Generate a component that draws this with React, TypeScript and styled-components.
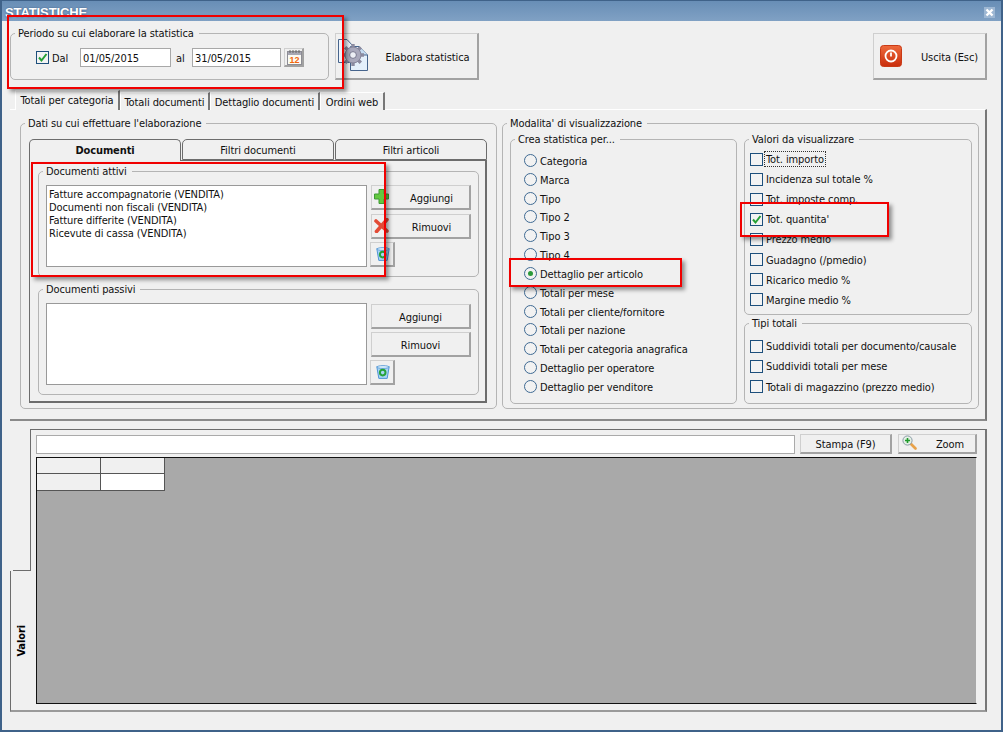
import React from "react";
import styled, { createGlobalStyle } from "styled-components";

const Global = createGlobalStyle`
  html, body { margin: 0; padding: 0; background: #f0f0f0; }
  * { box-sizing: border-box; }
`;

const Window = styled.div`
  position: relative;
  width: 1003px;
  height: 732px;
  overflow: hidden;
  border: 2px solid #3f6289;
  border-top-width: 1px;
  background: #f0f0f0;
  color: #111;
  font: 11px/13px "DejaVu Sans Condensed", "DejaVu Sans", sans-serif;
  font-stretch: condensed;
  letter-spacing: -0.1px;
  display: flex;
  flex-direction: column;
`;
const TitleBar = styled.div`
  height: 20px;
  flex: none;
  background: linear-gradient(#688eb6, #80a1c4);
  display: flex;
  align-items: center;
  justify-content: space-between;
  padding: 2px 6px 0 3px;
`;
const TitleText = styled.span`
  font: bold 13px "Liberation Sans", sans-serif;
  color: #fff;
  text-shadow: 0 0 2px #3b5a80;
`;
const CloseBox = styled.span`
  width: 11px;
  height: 11px;
  background: #9db7d3;
  display: flex;
`;
const Content = styled.div`
  flex: 1;
  padding: 0 14px 0 8px;
  display: flex;
  flex-direction: column;
`;
const TopRow = styled.div`
  margin-top: 5px;
  height: 54px;
  display: flex;
  align-items: flex-end;
`;
const Group = styled.fieldset<{ $w: number; $h: number; $pt?: number; $pl?: number }>`
  margin: 0;
  min-width: 0;
  width: ${(p) => p.$w}px;
  height: ${(p) => p.$h}px;
  flex: none;
  padding: ${(p) => p.$pt ?? 0}px 0 0 ${(p) => p.$pl ?? 0}px;
  border: 1px solid #b4b4b4;
  border-radius: 5px;
  & > legend {
    margin-left: ${(p) => 4 - (p.$pl ?? 0)}px;
  }
`;
const Legend = styled.legend`
  padding: 0 5px 0 3px;
  height: 14px;
  line-height: 16px;
  white-space: nowrap;
`;
const PeriodRow = styled.div`
  display: flex;
  align-items: center;
  height: 19px;
`;
const DateInput = styled.div<{ $w: number }>`
  width: ${(p) => p.$w}px;
  height: 19px;
  background: #fff;
  border: 1px solid #a8a8a8;
  padding-left: 2px;
  line-height: 19px;
`;
const AlLabel = styled.span`
  width: 21px;
  padding: 1px 0 0 5px;
`;
const DalLabel = styled.span`
  width: 31px;
  padding: 2px 0 0 3px;
`;
const Btn = styled.div<{ $w: number; $h: number; $ml?: number; $mt?: number; $auto?: boolean }>`
  flex: none;
  width: ${(p) => p.$w}px;
  height: ${(p) => p.$h}px;
  margin-left: ${(p) => (p.$auto ? "auto" : `${p.$ml ?? 0}px`)};
  margin-top: ${(p) => p.$mt ?? 0}px;
  display: flex;
  align-items: center;
  background: #f0f0f0;
  border: 1px solid #cfcfcf;
  border-right: 2px solid #a2a2a2;
  border-bottom: 2px solid #a2a2a2;
`;
const BtnIcon = styled.span<{ $w: number; $pl?: number; $pb?: number }>`
  flex: none;
  width: ${(p) => p.$w}px;
  padding-left: ${(p) => p.$pl ?? 0}px;
  padding-bottom: ${(p) => p.$pb ?? 0}px;
  display: flex;
`;
const BtnLabel = styled.span`
  flex: 1;
  padding-top: 2px;
  text-align: center;
  white-space: nowrap;
`;
const TabStrip = styled.div`
  margin-top: 11px;
  height: 19px;
  padding-left: 5px;
  display: flex;
  align-items: flex-end;
  position: relative;
  z-index: 1;
  margin-bottom: -1px;
`;
const TopTab = styled.div<{ $w: number; $active?: boolean }>`
  width: ${(p) => p.$w}px;
  height: ${(p) => (p.$active ? 20 : 18)}px;
  text-align: center;
  line-height: 19px;
  background: #f0f0f0;
  border-top: 1px solid #fff;
  border-left: 1px solid #fff;
  border-right: 2px solid #777;
  white-space: nowrap;
`;
const MainPanel = styled.div`
  height: 312px;
  width: 977px;
  flex: none;
  border-top: 1px solid #fff;
  border-right: 2px solid #777;
  border-bottom: 2px solid #8a8a8a;
  padding: 6px 0 0 10px;
  display: flex;
  gap: 5px;
`;
const InnerTabs = styled.div`
  display: flex;
  gap: 1px;
  height: 22px;
  position: relative;
  z-index: 1;
  margin-bottom: -1px;
`;
const InnerTab = styled.div<{ $active?: boolean }>`
  width: 152px;
  height: ${(p) => (p.$active ? 22 : 21)}px;
  border: 1px solid #6c6c6c;
  border-bottom: ${(p) => (p.$active ? "none" : "1px solid #6c6c6c")};
  border-radius: 5px 5px 0 0;
  background: #f0f0f0;
  text-align: center;
  line-height: 22px;
  font-weight: ${(p) => (p.$active ? 700 : 400)};
`;
const InnerPanel = styled.div`
  width: 458px;
  height: 243px;
  border: 1px solid #6c6c6c;
  border-right-width: 2px;
  border-bottom-width: 2px;
  padding: 3px 0 0 8px;
  display: flex;
  flex-direction: column;
  gap: 5px;
`;
const DocRow = styled.div`
  display: flex;
  gap: 4px;
`;
const ListBox = styled.div`
  width: 321px;
  height: 82px;
  background: #fff;
  border: 1px solid #999;
  padding: 2px 2px;
`;
const ListLine = styled.div`
  height: 13px;
  white-space: nowrap;
`;
const BtnCol = styled.div`
  display: flex;
  flex-direction: column;
`;
const TwoCols = styled.div`
  display: flex;
  gap: 7px;
  margin-top: 2px;
`;
const RightCol = styled.div`
  display: flex;
  flex-direction: column;
  gap: 1px;
`;
const OptRow = styled.div<{ $h: number }>`
  height: ${(p) => p.$h}px;
  display: flex;
  align-items: center;
  white-space: nowrap;
`;
const Radio = styled.span<{ $on?: boolean }>`
  width: 13px;
  height: 13px;
  flex: none;
  margin-right: 3px;
  border-radius: 50%;
  border: 1px solid #3f6a93;
  background: #f2f2f2;
  display: flex;
  align-items: center;
  justify-content: center;
  &::after {
    content: "";
    display: ${(p) => (p.$on ? "block" : "none")};
    width: 5px;
    height: 5px;
    border-radius: 50%;
    background: #2b9a3a;
  }
`;
const RadioLabel = styled.span`
  padding-top: 2px;
`;
const CheckBox = styled.span`
  width: 13px;
  height: 13px;
  flex: none;
  border: 1px solid #1d4f7c;
  background: #f3f3f3;
  display: flex;
`;
const CheckLabel = styled.span<{ $focus?: boolean }>`
  margin-left: 2px;
  padding: 1px 1px 0;
  outline: ${(p) => (p.$focus ? "1px dotted #333" : "none")};
`;
const Bottom = styled.div`
  margin-top: 8px;
  height: 283px;
  display: flex;
`;
const SideCol = styled.div`
  width: 20px;
  flex: none;
  display: flex;
  flex-direction: column;
`;
const SideSpacer = styled.div`
  flex: 1;
  border-right: 1px solid #6c6c6c;
  border-bottom: 1px solid #6c6c6c;
  margin-right: -1px;
  margin-left: 3px;
  position: relative;
  z-index: 1;
`;
const SideTab = styled.div`
  height: 141px;
  border-left: 1px solid #6c6c6c;
  border-bottom: 2px solid #9a9a9a;
  display: flex;
  align-items: center;
  justify-content: center;
`;
const SideLabel = styled.span`
  writing-mode: vertical-rl;
  transform: rotate(180deg);
  font-weight: 700;
  color: #000;
  margin-left: 1px;
`;
const Panel = styled.div`
  width: 957px;
  flex: none;
  border-top: 1px solid #6c6c6c;
  border-right: 2px solid #777;
  border-bottom: 2px solid #9a9a9a;
  padding: 4px 0 0 6px;
`;
const Toolbar = styled.div`
  height: 20px;
  display: flex;
  align-items: flex-end;
`;
const SearchBox = styled.div`
  width: 759px;
  height: 19px;
  background: #fff;
  border: 1px solid #aaa;
`;
const GridArea = styled.div`
  margin-top: 3px;
  width: 941px;
  height: 247px;
  background: #a9a9a9;
  border: 1px solid #111;
  border-right-color: #f0f0f0;
`;
const Sheet = styled.div`
  display: grid;
  grid-template-columns: 64px 64px;
  grid-template-rows: 16px 17px;
  width: 128px;
`;
const Cell = styled.div<{ $white?: boolean }>`
  background: ${(p) => (p.$white ? "#fff" : "#f0f0f0")};
  border-right: 1px solid #555;
  border-bottom: 1px solid #555;
`;
const Mark = styled.div<{ $x: number; $y: number; $w: number; $h: number }>`
  position: absolute;
  left: ${(p) => p.$x - 2}px;
  top: ${(p) => p.$y - 1}px;
  width: ${(p) => p.$w}px;
  height: ${(p) => p.$h}px;
  border: 2px solid #f00000;
  box-shadow: 3px 3px 4px rgba(0, 0, 0, 0.4);
  pointer-events: none;
  z-index: 5;
`;

const Tick = () => (
  <svg width="11" height="11" viewBox="0 0 11 11">
    <path d="M2 5.5 L4.5 8.5 L9.5 2" fill="none" stroke="#25a035" strokeWidth="2" />
  </svg>
);
const CloseIcon = () => (
  <svg width="11" height="11" viewBox="0 0 11 11">
    <path d="M2.5 2.5 L8.5 8.5 M8.5 2.5 L2.5 8.5" stroke="#fff" strokeWidth="2.4" />
  </svg>
);
const CalendarIcon = () => (
  <svg width="15" height="16" viewBox="0 0 15 16">
    <rect x="0.5" y="2.5" width="14" height="13" fill="#fbfbf4" stroke="#8d8d95" />
    <rect x="1" y="3" width="13" height="3" fill="#a8a8b4" />
    <path d="M3 1v3M6 1v3M9 1v3M12 1v3" stroke="#666" />
    <text x="7.5" y="13.5" textAnchor="middle" fontSize="9" fontWeight="700" fontFamily="Liberation Sans" fill="#f2660f">12</text>
  </svg>
);
const GearDocIcon = () => (
  <svg width="36" height="36" viewBox="0 0 36 36">
    <path d="M0.5 1.5 H9 L15 8 V24.5 H0.5 Z" fill="#eef4fb" stroke="#46648c" />
    <path d="M12.5 8.5 H21 L29.5 17 V32.5 H12.5 Z" fill="#e4f0fb" stroke="#46648c" />
    <path d="M21 8.5 V17 H29.5" fill="#c4dcf2" stroke="#46648c" />
    <g transform="translate(15 17)">
      <g stroke="#8b8ba0" strokeWidth="3.4">
        <path d="M0 -11 V11 M-11 0 H11 M-7.8 -7.8 L7.8 7.8 M7.8 -7.8 L-7.8 7.8" />
      </g>
      <circle r="8" fill="#a9a9bc" stroke="#85859b" />
      <circle r="3.4" fill="#eceff5" stroke="#77778e" />
    </g>
  </svg>
);
const PowerIcon = () => (
  <svg width="22" height="22" viewBox="0 0 22 22">
    <defs>
      <linearGradient id="pw" x1="0" y1="0" x2="0" y2="1">
        <stop offset="0" stopColor="#ee6a3c" />
        <stop offset="1" stopColor="#c92d0c" />
      </linearGradient>
    </defs>
    <rect x="0.5" y="0.5" width="21" height="21" rx="3" fill="url(#pw)" stroke="#c93a16" />
    <circle cx="11" cy="11" r="5.5" fill="none" stroke="#fff" strokeWidth="1.8" />
    <path d="M11 7.5 V11.5" stroke="#fff" strokeWidth="1.8" />
  </svg>
);
const PlusIcon = () => (
  <svg width="15" height="15" viewBox="0 0 15 15">
    <path d="M5 .5 H10 V5 H14.5 V10 H10 V14.5 H5 V10 H.5 V5 H5 Z" fill="#63c83f" stroke="#3f9a35" />
  </svg>
);
const CrossIcon = () => (
  <svg width="15" height="15" viewBox="0 0 15 15">
    <path d="M2 3 L13 13 M13 1.5 L2.5 13.5" stroke="#e24b36" strokeWidth="3.6" strokeLinecap="round" />
  </svg>
);
const BinIcon = () => (
  <svg width="14" height="14" viewBox="0 0 14 14">
    <path d="M.8 1.6 H13.2 L11.2 13.4 H2.8 Z" fill="#a9d4f5" stroke="#4f95d4" />
    <ellipse cx="7" cy="2" rx="6" ry="1.4" fill="#dff0fc" stroke="#4f95d4" strokeWidth=".8" />
    <circle cx="6.7" cy="7.6" r="2.8" fill="none" stroke="#27a33a" strokeWidth="2" />
  </svg>
);
const ZoomIcon = () => (
  <svg width="15" height="15" viewBox="0 0 15 15">
    <path d="M8.5 8.5 L13.5 13.5" stroke="#e8a24a" strokeWidth="2.6" strokeLinecap="round" />
    <circle cx="5.5" cy="5.5" r="4.6" fill="#e4f0e4" stroke="#8a9aa8" />
    <path d="M5.5 3 V8 M3 5.5 H8" stroke="#1f9a2c" strokeWidth="1.6" />
  </svg>
);

const radios = [
  "Categoria", "Marca", "Tipo", "Tipo 2", "Tipo 3", "Tipo 4", "Dettaglio per articolo",
  "Totali per mese", "Totali per cliente/fornitore", "Totali per nazione",
  "Totali per categoria anagrafica", "Dettaglio per operatore", "Dettaglio per venditore",
];
const values = [
  "Tot. importo", "Incidenza sul totale %", "Tot. imposte comp.", "Tot. quantita'",
  "Prezzo medio", "Guadagno (/pmedio)", "Ricarico medio %", "Margine medio %",
];
const totals = [
  "Suddividi totali per documento/causale", "Suddividi totali per mese", "Totali di magazzino (prezzo medio)",
];
const attivi = [
  "Fatture accompagnatorie (VENDITA)", "Documenti non fiscali (VENDITA)",
  "Fatture differite (VENDITA)", "Ricevute di cassa (VENDITA)",
];

const DocGroup = ({ title, lines, icons }: { title: string; lines: string[]; icons?: boolean }) => (
  <Group $w={441} $h={113} $pt={7} $pl={7}>
    <Legend>{title}</Legend>
    <DocRow>
      <ListBox>
        {lines.map((l) => <ListLine key={l}>{l}</ListLine>)}
      </ListBox>
      <BtnCol>
        <Btn $w={100} $h={25} $mt={icons ? 0 : 1}>
          {icons && <BtnIcon $w={22} $pl={2} $pb={2}><PlusIcon /></BtnIcon>}
          <BtnLabel>Aggiungi</BtnLabel>
        </Btn>
        <Btn $w={100} $h={25} $mt={icons ? 4 : 3}>
          {icons && <BtnIcon $w={22} $pl={2} $pb={2}><CrossIcon /></BtnIcon>}
          <BtnLabel>Rimuovi</BtnLabel>
        </Btn>
        <Btn $w={25} $h={25} $mt={3} $ml={-1}>
          <BtnIcon $w={22} $pl={5}><BinIcon /></BtnIcon>
        </Btn>
      </BtnCol>
    </DocRow>
  </Group>
);

export default function App() {
  return (
    <Window>
      <Global />
      <TitleBar>
        <TitleText>STATISTICHE</TitleText>
        <CloseBox><CloseIcon /></CloseBox>
      </TitleBar>
      <Content>
        <TopRow>
          <Group $w={319} $h={54} $pt={8} $pl={25}>
            <Legend>Periodo su cui elaborare la statistica</Legend>
            <PeriodRow>
              <CheckBox><Tick /></CheckBox>
              <DalLabel>Dal</DalLabel>
              <DateInput $w={91}>01/05/2015</DateInput>
              <AlLabel>al</AlLabel>
              <DateInput $w={89}>31/05/2015</DateInput>
              <Btn $w={20} $h={19} $ml={3}>
                <BtnIcon $w={17} $pl={2}><CalendarIcon /></BtnIcon>
              </Btn>
            </PeriodRow>
          </Group>
          <Btn $w={144} $h={47} $ml={6}>
            <BtnIcon $w={42} $pl={2}><GearDocIcon /></BtnIcon>
            <BtnLabel>Elabora statistica</BtnLabel>
          </Btn>
          <Btn $w={114} $h={47} $auto>
            <BtnIcon $w={40} $pl={6}><PowerIcon /></BtnIcon>
            <BtnLabel>Uscita (Esc)</BtnLabel>
          </Btn>
        </TopRow>
        <TabStrip>
          <TopTab $w={105} $active>Totali per categoria</TopTab>
          <TopTab $w={90}>Totali documenti</TopTab>
          <TopTab $w={110}>Dettaglio documenti</TopTab>
          <TopTab $w={65}>Ordini web</TopTab>
        </TabStrip>
        <MainPanel>
          <Group $w={477} $h={293} $pt={9} $pl={8}>
            <Legend>Dati su cui effettuare l'elaborazione</Legend>
            <InnerTabs>
              <InnerTab $active>Documenti</InnerTab>
              <InnerTab>Filtri documenti</InnerTab>
              <InnerTab>Filtri articoli</InnerTab>
            </InnerTabs>
            <InnerPanel>
              <DocGroup title="Documenti attivi" lines={attivi} icons />
              <DocGroup title="Documenti passivi" lines={[]} />
            </InnerPanel>
          </Group>
          <Group $w={477} $h={293} $pl={7}>
            <Legend>Modalita' di visualizzazione</Legend>
            <TwoCols>
              <Group $w={227} $h={272} $pt={5} $pl={13}>
                <Legend>Crea statistica per...</Legend>
                {radios.map((r) => (
                  <OptRow key={r} $h={18.83}>
                    <Radio $on={r === "Dettaglio per articolo"} />
                    <RadioLabel>{r}</RadioLabel>
                  </OptRow>
                ))}
              </Group>
              <RightCol>
                <Group $w={228} $h={183} $pt={3} $pl={5}>
                  <Legend>Valori da visualizzare</Legend>
                  {values.map((v, i) => (
                    <OptRow key={v} $h={20.1}>
                      <CheckBox>{v === "Tot. quantita'" && <Tick />}</CheckBox>
                      <CheckLabel $focus={i === 0}>{v}</CheckLabel>
                    </OptRow>
                  ))}
                </Group>
                <Group $w={228} $h={88} $pt={6} $pl={5}>
                  <Legend>Tipi totali</Legend>
                  {totals.map((v) => (
                    <OptRow key={v} $h={20.3}>
                      <CheckBox />
                      <CheckLabel>{v}</CheckLabel>
                    </OptRow>
                  ))}
                </Group>
              </RightCol>
            </TwoCols>
          </Group>
        </MainPanel>
        <Bottom>
          <SideCol>
            <SideSpacer />
            <SideTab><SideLabel>Valori</SideLabel></SideTab>
          </SideCol>
          <Panel>
            <Toolbar>
              <SearchBox />
              <Btn $w={92} $h={20} $ml={5}><BtnLabel>Stampa (F9)</BtnLabel></Btn>
              <Btn $w={79} $h={20} $ml={6}>
                <BtnIcon $w={26} $pl={3} $pb={3}><ZoomIcon /></BtnIcon>
                <BtnLabel>Zoom</BtnLabel>
              </Btn>
            </Toolbar>
            <GridArea>
              <Sheet>
                <Cell /><Cell /><Cell /><Cell $white />
              </Sheet>
            </GridArea>
          </Panel>
        </Bottom>
      </Content>
      <Mark $x={7} $y={15} $w={337} $h={74} />
      <Mark $x={31} $y={162} $w={355} $h={115} />
      <Mark $x={509} $y={258} $w={173} $h={29} />
      <Mark $x={740} $y={202} $w={149} $h={35} />
    </Window>
  );
}
